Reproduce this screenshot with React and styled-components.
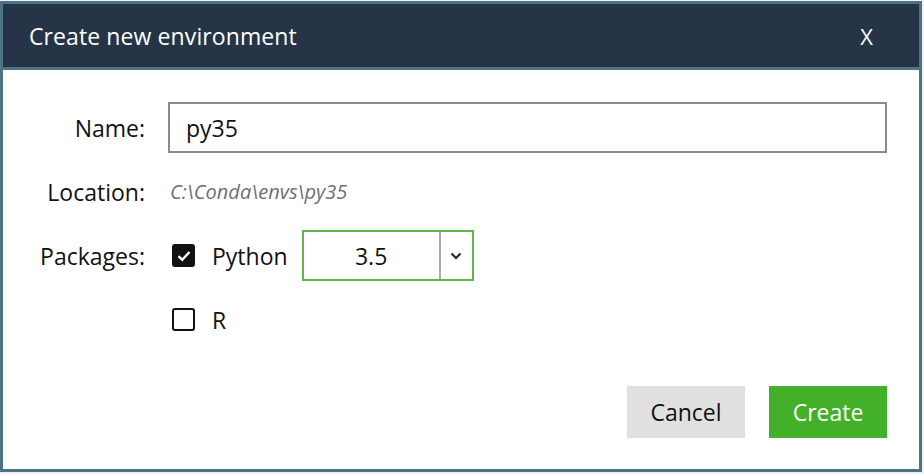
import React from "react";
import styled, { createGlobalStyle } from "styled-components";

const Global = createGlobalStyle`
  html, body { margin: 0; padding: 0; background: #ffffff; }
  body { font-family: "Open Sans", "Noto Sans", sans-serif; }
  * { box-sizing: border-box; }
`;

const Page = styled.div`
  width: 924px;
  height: 474px;
  padding-top: 1px;
  background: #f2f2f2;
`;

const Dialog = styled.div`
  width: 922px;
  height: 471px;
  border: 3px solid #4e7385;
  background: #ffffff;
  display: flex;
  flex-direction: column;
`;

const Header = styled.div`
  height: 66px;
  flex: none;
  background: #253547;
  border-bottom: 3px solid #4e7385;
  display: flex;
  align-items: center;
  justify-content: space-between;
  padding: 0 46px 0 26px;
  color: #ffffff;
  font-size: 23px;
`;

const Title = styled.span`
  letter-spacing: 0.1px;
`;

const Close = styled.button`
  border: none;
  background: none;
  color: #ffffff;
  font: inherit;
  font-size: 22px;
  padding: 0;
  cursor: pointer;
`;

const Body = styled.div`
  flex: 1;
  display: flex;
  flex-direction: column;
  padding: 32px 32px 31px 0;
`;

const Form = styled.div`
  display: grid;
  grid-template-columns: 142px 1fr;
  column-gap: 23px;
  row-gap: 13px;
  grid-auto-rows: 51px;
`;

const Label = styled.div`
  display: flex;
  align-items: center;
  justify-content: flex-end;
  font-size: 23px;
  color: #111;
`;

const Field = styled.div`
  display: flex;
  align-items: center;
`;

const TextInput = styled.input`
  width: 100%;
  height: 51px;
  border: 2px solid #8a8a8a;
  padding: 0 16px;
  font: inherit;
  font-size: 23px;
  color: #111;
  outline: none;
`;

const Path = styled.span`
  font-style: italic;
  font-size: 20px;
  color: #6f6f6f;
  padding-left: 2px;
`;

const Check = styled.span`
  width: 23px;
  height: 23px;
  border-radius: 3px;
  border: 2.5px solid #111;
  background: ${(p) => (p.$checked ? "#111" : "#fff")};
  display: inline-flex;
  align-items: center;
  justify-content: center;
  margin-left: 4px;
  flex: none;
`;

const CheckLabel = styled.span`
  font-size: 23px;
  color: #111;
  margin-left: 17px;
`;

const Select = styled.div`
  margin-left: 14px;
  width: 172px;
  height: 51px;
  border: 2px solid #62b54a;
  display: flex;
  align-items: stretch;
`;

const SelectValue = styled.div`
  flex: 1;
  display: flex;
  align-items: center;
  justify-content: center;
  font-size: 23px;
  color: #111;
  border-right: 2px solid #aaaaaa;
`;

const SelectArrow = styled.div`
  width: 31px;
  display: flex;
  align-items: center;
  justify-content: center;
`;

const Footer = styled.div`
  margin-top: auto;
  display: flex;
  justify-content: flex-end;
  gap: 24px;
`;

const Button = styled.button`
  width: 118px;
  height: 52px;
  border: none;
  font: inherit;
  font-size: 23px;
  background: ${(p) => (p.$primary ? "#43b02a" : "#e0e0e0")};
  color: ${(p) => (p.$primary ? "#ffffff" : "#111")};
  cursor: pointer;
`;

const CheckMark = () => (
  <svg width="14" height="12" viewBox="0 0 14 12">
    <path d="M1.5 6.2 L5.2 9.8 L12.5 2" fill="none" stroke="#fff" strokeWidth="2.4" />
  </svg>
);

const Chevron = () => (
  <svg width="12" height="8" viewBox="0 0 12 8">
    <path d="M1.5 1.5 L6 6 L10.5 1.5" fill="none" stroke="#222" strokeWidth="2" />
  </svg>
);

export default function App() {
  return (
    <>
      <Global />
      <Page>
        <Dialog>
          <Header>
            <Title>Create new environment</Title>
            <Close>X</Close>
          </Header>
          <Body>
            <Form>
              <Label>Name:</Label>
              <Field>
                <TextInput defaultValue="py35" />
              </Field>
              <Label>Location:</Label>
              <Field>
                <Path>C:\Conda\envs\py35</Path>
              </Field>
              <Label>Packages:</Label>
              <Field>
                <Check $checked>
                  <CheckMark />
                </Check>
                <CheckLabel>Python</CheckLabel>
                <Select>
                  <SelectValue>3.5</SelectValue>
                  <SelectArrow>
                    <Chevron />
                  </SelectArrow>
                </Select>
              </Field>
              <div />
              <Field>
                <Check />
                <CheckLabel>R</CheckLabel>
              </Field>
            </Form>
            <Footer>
              <Button>Cancel</Button>
              <Button $primary>Create</Button>
            </Footer>
          </Body>
        </Dialog>
      </Page>
    </>
  );
}
